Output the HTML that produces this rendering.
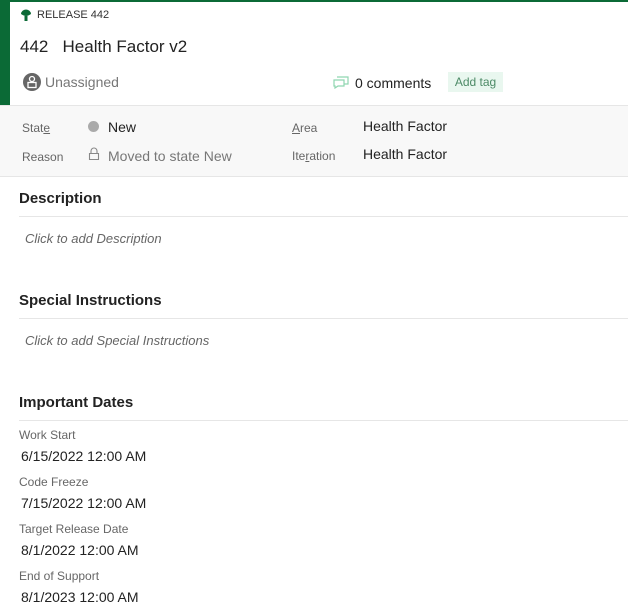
<!DOCTYPE html>
<html><head><style>
body{margin:0;width:628px;height:613px;overflow:hidden;background:#fff;font-family:"Liberation Sans",sans-serif;color:#222;position:relative}
.a{position:absolute;white-space:nowrap}
.lbl{font-size:12px;color:#666}
.val{font-size:14px;color:#222}
.h{font-size:15px;font-weight:bold;color:#222}
.line{position:absolute;left:19px;right:0;height:1px;background:#e6e6e6}
.ph{font-size:13px;font-style:italic;color:#666}
</style></head><body>
<div class="a" style="left:0;top:0;width:628px;height:2px;background:#0b6a36"></div>
<div class="a" style="left:0;top:0;width:10px;height:105px;background:#0b6a36"></div>
<svg class="a" style="left:20px;top:9px" width="12" height="13" viewBox="0 0 12 13"><path d="M1 5a5 4.5 0 0 1 10 0Q8 7 6 7Q4 7 1 5z" fill="#0b6a36"/><rect x="4.5" y="7" width="3" height="5" fill="#0b6a36"/></svg>
<div class="a" style="left:37px;top:9px;font-size:11px;color:#333">RELEASE 442</div>
<div class="a" style="left:20px;top:37px;font-size:17px;color:#222">442&nbsp;&nbsp;&nbsp;Health Factor v2</div>
<svg class="a" style="left:23px;top:73px" width="18" height="18" viewBox="0 0 18 18"><circle cx="9" cy="9" r="9" fill="#666"/><circle cx="9" cy="6" r="2.5" fill="none" stroke="#fff" stroke-width="1.3"/><rect x="5" y="9.5" width="8" height="5" fill="none" stroke="#fff" stroke-width="1.3"/></svg>
<div class="a" style="left:45px;top:74px;font-size:14px;color:#777">Unassigned</div>
<svg class="a" style="left:333px;top:76px" width="16" height="13" viewBox="0 0 16 13"><path d="M4 1h11v7h-4M1 4h10v6H5l-3 2V10H1z" fill="none" stroke="#8fd6b0" stroke-width="1.2"/></svg>
<div class="a" style="left:355px;top:75px;font-size:14px;color:#222">0 comments</div>
<div class="a" style="left:448px;top:72px;width:55px;height:20px;background:#e9f7ef;font-size:12px;color:#4c8a66;line-height:20px;text-align:center">Add tag</div>
<div class="a" style="left:0;top:105px;width:628px;height:70px;background:#f8f8f8;border-top:1px solid #e6e6e6;border-bottom:1px solid #e6e6e6"></div>
<div class="a lbl" style="left:22px;top:121px">Stat<u>e</u></div>
<div class="a" style="left:88px;top:121px;width:11px;height:11px;border-radius:50%;background:#aaa"></div>
<div class="a val" style="left:108px;top:119px">New</div>
<div class="a lbl" style="left:22px;top:150px">Reason</div>
<svg class="a" style="left:88px;top:147px" width="12" height="14" viewBox="0 0 12 14"><path d="M3 6V4a3 3 0 0 1 6 0v2M1.5 6.5h9v6h-9z" fill="none" stroke="#888" stroke-width="1.1"/></svg>
<div class="a val" style="left:108px;top:148px;color:#777">Moved to state New</div>
<div class="a lbl" style="left:292px;top:121px"><u>A</u>rea</div>
<div class="a val" style="left:363px;top:118px">Health Factor</div>
<div class="a lbl" style="left:292px;top:149px">Ite<u>r</u>ation</div>
<div class="a val" style="left:363px;top:146px">Health Factor</div>
<div class="a h" style="left:19px;top:190px">Description</div>
<div class="line" style="top:216px"></div>
<div class="a ph" style="left:25px;top:231px">Click to add Description</div>
<div class="a h" style="left:19px;top:292px">Special Instructions</div>
<div class="line" style="top:318px"></div>
<div class="a ph" style="left:25px;top:333px">Click to add Special Instructions</div>
<div class="a h" style="left:19px;top:394px">Important Dates</div>
<div class="line" style="top:420px"></div>
<div class="a lbl" style="left:19px;top:428px">Work Start</div>
<div class="a val" style="left:21px;top:448px">6/15/2022 12:00 AM</div>
<div class="a lbl" style="left:19px;top:475px">Code Freeze</div>
<div class="a val" style="left:21px;top:495px">7/15/2022 12:00 AM</div>
<div class="a lbl" style="left:19px;top:522px">Target Release Date</div>
<div class="a val" style="left:21px;top:542px">8/1/2022 12:00 AM</div>
<div class="a lbl" style="left:19px;top:569px">End of Support</div>
<div class="a val" style="left:21px;top:589px">8/1/2023 12:00 AM</div>
</body></html>
